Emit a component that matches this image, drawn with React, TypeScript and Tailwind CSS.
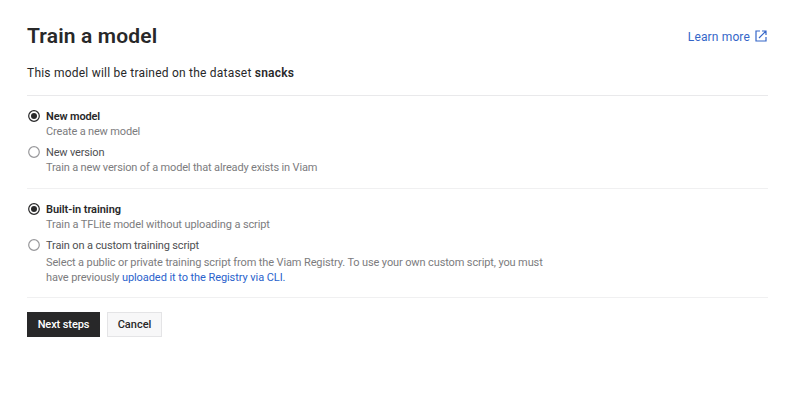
import type { ReactNode } from "react";

function Radio({ on }: { on?: boolean }) {
  return (
    <svg width="12" height="12" viewBox="0 0 12 12" className="mt-[2px] shrink-0">
      <circle cx="6" cy="6" r="5.3" fill="white" stroke={on ? "#282829" : "#98989b"} strokeWidth="1.2" />
      {on && <circle cx="6" cy="6" r="3" fill="#282829" />}
    </svg>
  );
}

function Option({ on, label, labelClass, children }: { on?: boolean; label: string; labelClass: string; children: ReactNode }) {
  return (
    <label className="flex gap-[6px] pl-px">
      <Radio on={on} />
      <span className="flex flex-col items-start whitespace-nowrap text-[11px] leading-4 text-[#7c7c7e]">
        <span className={`pt-px leading-[15px] ${on ? "font-semibold text-[#282829]" : "text-[#4e4f52]"} ${labelClass}`}>{label}</span>
        {children}
      </span>
    </label>
  );
}

export default function App() {
  return (
    <main className="h-[407px] w-[800px] bg-white pl-[27px] pr-8 pt-[22px] font-['Roboto','Liberation_Sans',sans-serif] text-[#282829]">
      <header className="flex h-7 items-center justify-between">
        <h1 className="whitespace-nowrap pt-[2px] text-[21px] font-semibold tracking-[0.16px]">Train a model</h1>
        <a className="flex items-center gap-[5px] pr-px text-xs text-[#3566c8]">
          <span className="pt-px tracking-[0.15px]">Learn more</span>
          <svg width="12" height="12" viewBox="0 0 12 12" fill="none" stroke="currentColor" strokeWidth="1.2">
            <path d="M5 1H1v10h10V7M7 1h4v4M11 1 4 8" />
          </svg>
        </a>
      </header>
      <p className="mt-[14px] whitespace-nowrap text-xs leading-[18px] tracking-[0.22px]">
        This model will be trained on the dataset <b className="font-semibold">snacks</b>
      </p>
      <section className="mt-[13px] flex h-[93px] flex-col gap-1 border-t border-[#e9e9eb] pt-3">
        <Option on label="New model" labelClass="tracking-[-0.14px]">
          <span className="tracking-[-0.16px]">Create a new model</span>
        </Option>
        <Option label="New version" labelClass="tracking-[-0.17px]">
          <span className="tracking-[-0.16px]">Train a new version of a model that already exists in Viam</span>
        </Option>
      </section>
      <section className="flex h-[110px] flex-col gap-1 border-y border-[#f0f0f1] pt-3">
        <Option on label="Built-in training" labelClass="tracking-[-0.06px]">
          <span className="tracking-[-0.11px]">Train a TFLite model without uploading a script</span>
        </Option>
        <Option label="Train on a custom training script" labelClass="tracking-[-0.14px]">
          <span className="mt-[2px] tracking-[-0.12px]">Select a public or private training script from the Viam Registry. To use your own custom script, you must</span>
          <span className="-mt-px tracking-[-0.13px]">
            have previously <a className="text-[#2a62cc] tracking-[-0.07px]">uploaded it to the Registry via CLI.</a>
          </span>
        </Option>
      </section>
      <footer className="mt-[14px] flex gap-[7px] text-[11px] font-medium">
        <button className="h-[25px] w-[73px] whitespace-nowrap bg-[#282829] pt-px tracking-[-0.1px] text-white">Next steps</button>
        <button className="h-[25px] w-[55px] border border-[#e4e4e6] bg-[#f7f7f8] pt-px">Cancel</button>
      </footer>
    </main>
  );
}
